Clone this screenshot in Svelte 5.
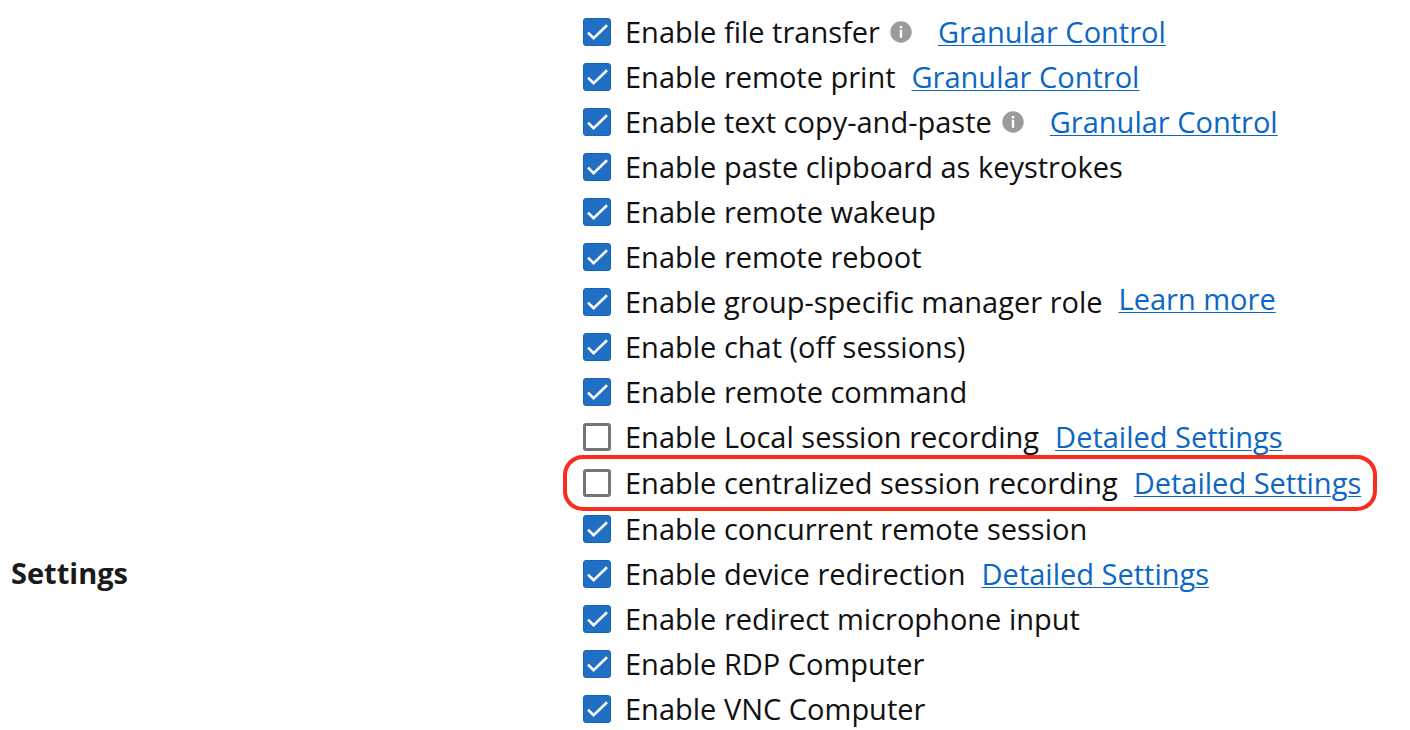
<script lang="ts">
	interface Setting {
		id: string;
		label: string;
		checked: boolean;
		info?: boolean;
		link?: string;
		raised?: boolean;
		highlighted?: boolean;
	}

	let settings = $state<Setting[]>([
		{ id: 'file-transfer', label: 'Enable file transfer', checked: true, info: true, link: 'Granular Control' },
		{ id: 'remote-print', label: 'Enable remote print', checked: true, link: 'Granular Control' },
		{ id: 'copy-paste', label: 'Enable text copy-and-paste', checked: true, info: true, link: 'Granular Control' },
		{ id: 'keystrokes', label: 'Enable paste clipboard as keystrokes', checked: true },
		{ id: 'wakeup', label: 'Enable remote wakeup', checked: true },
		{ id: 'reboot', label: 'Enable remote reboot', checked: true },
		{ id: 'manager-role', label: 'Enable group-specific manager role', checked: true, link: 'Learn more', raised: true },
		{ id: 'chat', label: 'Enable chat (off sessions)', checked: true },
		{ id: 'command', label: 'Enable remote command', checked: true },
		{ id: 'local-recording', label: 'Enable Local session recording', checked: false, link: 'Detailed Settings' },
		{
			id: 'central-recording',
			label: 'Enable centralized session recording',
			checked: false,
			link: 'Detailed Settings',
			highlighted: true
		},
		{ id: 'concurrent', label: 'Enable concurrent remote session', checked: true },
		{ id: 'redirection', label: 'Enable device redirection', checked: true, link: 'Detailed Settings' },
		{ id: 'microphone', label: 'Enable redirect microphone input', checked: true },
		{ id: 'rdp', label: 'Enable RDP Computer', checked: true },
		{ id: 'vnc', label: 'Enable VNC Computer', checked: true }
	]);
</script>

<section class="settings" aria-labelledby="settings-heading">
	<h2 id="settings-heading">Settings</h2>
	<ul class="options">
		{#each settings as setting (setting.id)}
			<li class="option" class:option--highlighted={setting.highlighted}>
				<span class="box">
					<input type="checkbox" id={setting.id} bind:checked={setting.checked} />
					{#if setting.checked}
						<svg class="tick" viewBox="0 0 28 28" aria-hidden="true">
							<path d="M5 14.6 10.6 20.2 24 7.2" />
						</svg>
					{/if}
				</span>
				<label for={setting.id}>{setting.label}</label>
				{#if setting.info}
					<svg class="info" viewBox="0 0 22 22" role="img" aria-label="Information">
						<circle cx="11" cy="11" r="10.7" fill="#9b9b9b" />
						<rect x="9.8" y="5" width="2.4" height="2.4" fill="#fff" />
						<rect x="9.8" y="8.8" width="2.4" height="8" fill="#fff" />
					</svg>
				{/if}
				{#if setting.link}
					<a href="#{setting.id}" class:raised={setting.raised}>{setting.link}</a>
				{/if}
			</li>
		{/each}
	</ul>
</section>

<style>
	:global(body) {
		margin: 0;
		background: #fff;
	}

	.settings {
		display: grid;
		grid-template-columns: minmax(160px, 572px) 1fr;
		padding: 12px 11px 0;
		font-family: 'Open Sans', 'Noto Sans', sans-serif;
		font-size: 29px;
		line-height: 40px;
		color: #111;
	}

	h2 {
		align-self: end;
		margin: 0;
		padding-bottom: 136px;
		font-size: 29px;
		font-weight: 700;
		color: #1a1a1a;
	}

	.options {
		display: flex;
		flex-direction: column;
		align-items: flex-start;
		gap: 5px;
		list-style: none;
		margin: 0;
		padding: 0;
	}

	.option {
		display: flex;
		align-items: center;
		white-space: nowrap;
	}

	.option--highlighted {
		position: relative;
		margin: 1px 0;
	}

	.option--highlighted::after {
		content: '';
		position: absolute;
		inset: -8px -16px -8px -20px;
		border: 4px solid #fb2b1d;
		border-radius: 20px;
		pointer-events: none;
	}

	.box {
		display: grid;
		width: 28px;
		height: 28px;
		margin-right: 14px;
	}

	.box > :global(*) {
		grid-area: 1 / 1;
	}

	input {
		appearance: none;
		box-sizing: border-box;
		width: 28px;
		height: 28px;
		margin: 0;
		border: 3px solid #757575;
		border-radius: 3px;
		background: #fff;
	}

	input:checked {
		border: 1px solid #1463bd;
		background: #216fc4;
	}

	.tick {
		width: 28px;
		height: 28px;
		fill: none;
		stroke: #fff;
		stroke-width: 2.6;
		pointer-events: none;
	}

	.info {
		width: 22px;
		height: 22px;
		margin: 0 10px;
	}

	a {
		margin-left: 16px;
		color: #0b67c5;
		text-decoration: underline;
		text-decoration-thickness: 1px;
		text-underline-offset: 2px;
	}

	.raised {
		align-self: flex-start;
		line-height: 34px;
	}
</style>
